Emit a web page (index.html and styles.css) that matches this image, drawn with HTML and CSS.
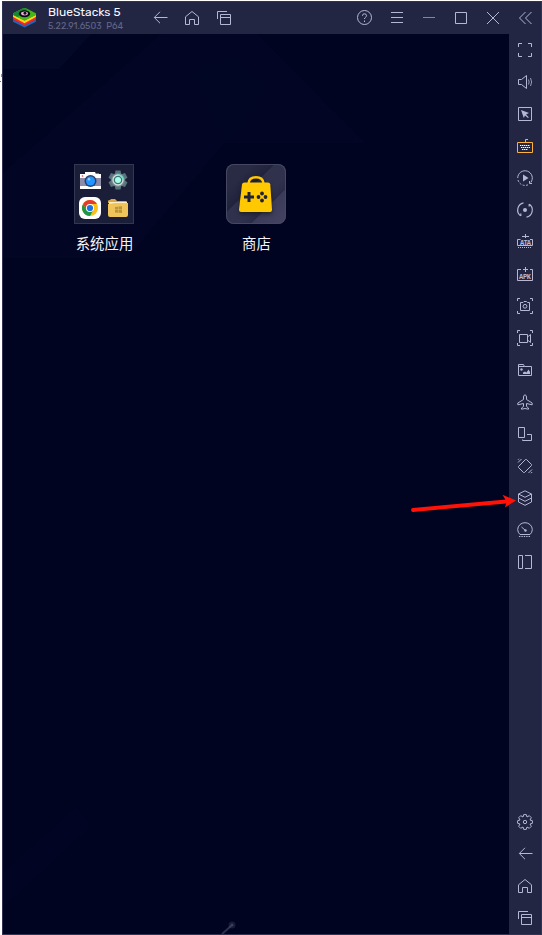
FILE: index.html
```html
<!DOCTYPE html>
<html lang="zh-CN">
<head>
<meta charset="utf-8">
<title>BlueStacks 5</title>
<link rel="stylesheet" href="styles.css">
</head>
<body>
<svg class="defs" aria-hidden="true">
  <symbol id="back" viewBox="0 0 16 16"><path d="M15.500 7.500H2.500M8 1.800L2.300 7.500L8 13.200"/></symbol>
  <symbol id="home" viewBox="0 0 16 16"><path d="M1.500 14.500V6.800L8 1.500L14.500 6.800V14.500H10.500V9.500H5.500V14.500Z"/></symbol>
  <symbol id="recent" viewBox="0 0 16 16"><path d="M1.500 9V1.500H11M4.500 4.500H14.500V14.500H4.500ZM4.500 7.500H14.500"/></symbol>
</svg>
<div class="window">
  <header class="titlebar">
    <svg class="logo" viewBox="0 0 24 22">
      <path fill="#1769c4" d="M0 13L12 19L24 13V15.500L12 21.500L0 15.500Z"/>
      <path fill="#f4252c" d="M0 10.500L12 16.500L24 10.500V13L12 19.500L0 13Z"/>
      <path fill="#ffd414" d="M0 8L12 14L24 8V10.500L12 17L0 10.500Z"/>
      <path fill="#44b618" d="M0 6.500L11 1H13L24 6.500V8.500L12 14.500L0 8.500Z"/>
      <path fill="#178735" d="M0 6.500L11 1L15 2L5 10.500L0 8Z"/>
      <ellipse cx="12" cy="7" rx="6" ry="3.700" fill="#070a18"/>
      <ellipse cx="12" cy="6.800" rx="3.600" ry="2" fill="#e7afd0"/>
      <circle cx="12.500" cy="6.500" r="1.500" fill="#101020"/>
    </svg>
    <div class="brand"><div class="name">BlueStacks 5</div><div class="version">5.22.91.6503&nbsp; P64</div></div>
    <nav class="nav">
      <span class="slot"><svg class="icon"><use href="#back"/></svg></span>
      <span class="slot"><svg class="icon"><use href="#home"/></svg></span>
      <span class="slot"><svg class="icon"><use href="#recent"/></svg></span>
    </nav>
    <nav class="controls">
      <span class="slot"><svg class="icon" viewBox="0 0 16 16"><circle cx="7.500" cy="7.500" r="7"/><path d="M5.500 6V5.500Q5.500 3.800 7.500 3.800T9.500 5.700Q9.500 6.700 8.500 7.300T7.500 9M7.500 10.500V12"/></svg></span>
      <span class="slot"><svg class="icon" viewBox="0 0 16 16"><path d="M2 2.500H14M2 7.500H14M2 12.500H14"/></svg></span>
      <span class="slot"><svg class="icon dim" viewBox="0 0 16 16"><path d="M2 7.500H14"/></svg></span>
      <span class="slot"><svg class="icon" viewBox="0 0 16 16"><path d="M2.500 2.500H13.500V13.500H2.500Z"/></svg></span>
      <span class="slot"><svg class="icon" viewBox="0 0 16 16"><path d="M2 2L14 14M14 2L2 14"/></svg></span>
      <span class="slot"><svg class="icon" viewBox="0 0 16 16"><path d="M8.500 2L2.500 8L8.500 14M14.500 2L8.500 8L14.500 14"/></svg></span>
    </nav>
  </header>
  <div class="body">
    <main class="desktop">
      <svg class="wallpaper" viewBox="0 0 506 900">
        <path class="facet-strong" d="M0 0H88L56 35H0Z"/>
        <path class="facet" d="M0 139L158 0H255L362 109H222L124 224H0Z"/>
        <path class="facet-faint" d="M188 38L224 23L265 50L222 109Z"/>
        <path class="facet-faint" d="M0 838L74 772L88 793L0 874Z"/>
        <path class="streak" d="M219 900L228 892"/><circle cx="229" cy="891" r="3.500" fill="#8d93b5" opacity=".16"/><circle cx="229" cy="891" r="1.500" fill="#8d93b5" opacity=".3"/>
      </svg>
      <div class="apps">
        <div class="app">
          <div class="folder">
            <svg viewBox="0 0 22 22">
              <path fill="#fff" d="M6 3H16L17 5H22V20H1V5H6Z"/><path fill="#8d8ca8" d="M1 9H22V17H1Z"/><path fill="#3fa334" d="M17 4H20V5H17Z"/><circle cx="3.500" cy="7" r=".8" fill="#e83b3b"/>
              <circle cx="11.500" cy="12" r="6" fill="#27406d"/><circle cx="11.500" cy="12" r="4.500" fill="#2196ff"/><circle cx="10" cy="10.200" r="1.200" fill="#8cd0ff"/>
            </svg>
            <svg viewBox="0 0 22 22">
              <g fill="#58747c"><path id="tooth" d="M8.500 1.500H13.500L14.500 6V16L13.500 20.500H8.500L7.500 16V6Z"/><use href="#tooth" transform="rotate(60 11 11)"/><use href="#tooth" transform="rotate(120 11 11)"/></g>
              <circle cx="11" cy="11" r="7" fill="#73858b"/><circle cx="11" cy="11" r="5" fill="#3d7777" stroke="#d5e1df" stroke-width="1.300"/><path d="M11 5.800A5.200 5.200 0 0 1 16.200 11" fill="none" stroke="#5de3c8" stroke-width="1.300"/><circle cx="11" cy="11" r="3" fill="#a7ffeb"/>
            </svg>
            <svg viewBox="0 0 22 22">
              <rect width="22" height="22" rx="6" fill="#fff"/><circle cx="11" cy="11" r="8" fill="#fbc116"/>
              <path fill="#e33b2e" d="M4.070 7A8 8 0 0 1 17.930 7H11L7.540 13Z"/><path fill="#219647" d="M4.070 7L7.540 13L11 15L14.460 13L11 19A8 8 0 0 1 4.070 7Z"/>
              <circle cx="11" cy="11" r="4" fill="#fff"/><circle cx="11" cy="11" r="3.100" fill="#1a73e8"/>
            </svg>
            <svg viewBox="0 0 22 22">
              <path fill="#d9a844" d="M1 4Q1 3 3 3L4 2H8L10 4H19Q20 4 20 6H1Z"/><path fill="#fff0c8" d="M2 5H20V7H2Z"/><path fill="#efc45b" d="M1 7L8 6H21V18Q21 20 19 20H3Q1 20 1 18Z"/><path fill="#ba953a" d="M8 10L11 9.700V12.500H8ZM11.500 9.600L15 9.300V12.500H11.500ZM8 13H11V15.700L8 15.400ZM11.500 13H15V16L11.500 15.700Z"/>
            </svg>
          </div>
          <span class="label">系统应用</span>
        </div>
        <div class="app">
          <div class="store">
            <svg viewBox="0 0 60 60">
              <path d="M22.500 19.500Q23 13.300 30 13.300T37.500 19.500" fill="none" stroke="#ffc800" stroke-width="2.500"/>
              <path fill="#ffc800" d="M18.500 18.500H42Q44 18.500 44.300 20.500L46 45.500Q46.100 48 44 48H15Q12.900 48 13 45.500L16 20.500Q16.300 18.500 18.500 18.500Z"/>
              <path d="M18 33H28M23 28V38" stroke="#202337" stroke-width="3"/>
              <g fill="#202337"><circle cx="36" cy="29.500" r="1.900"/><circle cx="36" cy="36.500" r="1.900"/><circle cx="32.500" cy="33" r="1.900"/><circle cx="39.500" cy="33" r="1.900"/></g>
            </svg>
          </div>
          <span class="label">商店</span>
        </div>
      </div>
    </main>
    <aside class="sidebar">
      <span class="slot"><svg class="icon" viewBox="0 0 16 16"><path d="M1.500 5V1.500H5M11 1.500H14.500V5M14.500 11V14.500H11M5 14.500H1.500V11"/></svg></span>
      <span class="slot"><svg class="icon" viewBox="0 0 16 16"><path d="M1.500 5.500H4.500L9.500 1.500V14.500L4.500 10.500H1.500Z"/><path d="M11.500 5.500Q12.800 8 11.500 10.500M13.500 4Q15.800 8 13.500 12" opacity=".8"/></svg></span>
      <span class="slot"><svg class="icon" viewBox="0 0 16 16"><path d="M1.500 1.500H14.500V14.500H1.500Z"/><path class="solid" d="M4 4L12 7L9 8.500L11.800 11.200L11 12L8 9.500L6.800 12Z"/></svg></span>
      <span class="slot"><svg class="icon active" viewBox="0 0 16 16"><path d="M.5 4.500H15.500V14.500H.5ZM8.500 4.500V1.500H11"/><path class="keys" d="M3 7.500H13M4 9.500H13M5 11.500H11" stroke-dasharray="1.400 .6"/></svg></span>
      <span class="slot"><svg class="icon" viewBox="0 0 16 16"><path d="M.7 8A7.300 7.300 0 1 1 13.800 12.500"/><path d="M1 10A7.300 7.300 0 0 0 11 14.800" stroke-dasharray="2 1.500"/><path d="M12.500 11V13.500H15"/><path class="solid" d="M6 4.500L11.500 8L6 11.500Z"/></svg></span>
      <span class="slot"><svg class="icon heavy" viewBox="0 0 16 16"><path d="M6.500 .8A7.300 7.300 0 0 0 3.500 13.700M3.800 14V11.500M9.500 15.200A7.300 7.300 0 0 0 12.500 2.300M12.200 2V4.500"/><circle class="solid" cx="8" cy="8" r="2"/></svg></span>
      <span class="slot"><svg class="icon" viewBox="0 0 16 16"><path d="M8.500 0V4M5 2.500H12M3.500 5.500H.5V11.500H15.500V5.500H13"/><path d="M1 13.500H15" stroke-dasharray="1 1"/><text class="micro" x="3" y="10.500" textLength="11">ATA</text></svg></span>
      <span class="slot"><svg class="icon" viewBox="0 0 16 16"><path d="M4 3.500H.5V14.500H15.500V3.500H13M8.500 1V6M6 3.500H11"/><text class="micro" x="2" y="12.500" textLength="12">APK</text></svg></span>
      <span class="slot"><svg class="icon" viewBox="0 0 16 16"><path d="M.5 3V.5H3M13 .5H15.500V3M15.500 13V15.500H13M3 15.500H.5V13M3.500 4.500H6L7 3.500H9.500L10.500 4.500H12.500V12.500H3.500Z"/><circle cx="8" cy="8.300" r="1.900"/></svg></span>
      <span class="slot"><svg class="icon" viewBox="0 0 16 16"><path d="M.5 3V.5H3M13 .5H15.500V3M15.500 13V15.500H13M3 15.500H.5V13M2.500 4.500H10.500V12.500H2.500ZM10.500 7L13.500 4.500V12.500L10.500 10Z"/></svg></span>
      <span class="slot"><svg class="icon" viewBox="0 0 16 16"><path d="M1.500 13.500V2.500H6.500L7.500 4.500H14.500V13.500ZM1.500 4.500H7.500"/><circle class="solid" cx="4.500" cy="7.500" r="1.200"/><path class="solid" d="M6 12V10.500L8 9.500L9.500 10.500L11.500 7.500L13 10V12Z"/></svg></span>
      <span class="slot"><svg class="icon" viewBox="0 0 16 16"><path d="M8 .8Q6.500 1.300 6.500 3V5.500L.8 9V10.800L6.500 9.500V12.500L4.500 14V15.200L8 14.500L11.500 15.200V14L9.500 12.500V9.500L15.200 10.800V9L9.500 5.500V3Q9.500 1.300 8 .8Z"/></svg></span>
      <span class="slot"><svg class="icon" viewBox="0 0 16 16"><path d="M1.500 1.500H7.500V11.500H1.500ZM10 8.500H14.500V14.500H5.500V13.500"/></svg></span>
      <span class="slot"><svg class="icon" viewBox="0 0 16 16"><path d="M9.500 1.500L14.500 6.500V7.500L7.500 14.500H6.500L1.500 9.500V8.500L8.500 1.500Z"/><path d="M1 4.500L4.500 1M1 1.800L2 .8M11.500 15L15 11.500M14 15.200L15.200 14"/></svg></span>
      <span class="slot"><svg class="icon" viewBox="0 0 16 16"><path d="M8 .8L14.500 4V12L8 15.300L1.500 12V4ZM1.500 4L8 7.300L14.500 4M1.500 8L8 11.300L14.500 8"/></svg></span>
      <span class="slot"><svg class="icon" viewBox="0 0 16 16"><path d="M3 12.500Q.7 10.500 .7 7.500A7.300 6.800 0 0 1 15.300 7.500Q15.300 10.500 13 12.500ZM8.500 8.500L4.500 5"/><circle class="solid" cx="8.500" cy="8.500" r="1.200"/><path d="M2 14.500H14" stroke-dasharray="1.400 1"/></svg></span>
      <span class="slot"><svg class="icon" viewBox="0 0 16 16"><path d="M1.500 1.500H5.500V14.500H1.500ZM8 1.500H14.500V14.500H8"/></svg></span>
      <span class="slot settings"><svg class="icon" viewBox="0 0 16 16"><path stroke-linejoin="round" d="M6.700 .6H9.300L10 3L12.300 1.700L14.300 3.700L13 6L15.400 6.700V9.300L13 10L14.300 12.300L12.300 14.300L10 13L9.300 15.400H6.700L6 13L3.700 14.300L1.700 12.300L3 10L.6 9.300V6.700L3 6L1.700 3.700L3.700 1.700L6 3Z"/><circle cx="8" cy="8" r="1.700"/></svg></span>
      <span class="slot"><svg class="icon"><use href="#back"/></svg></span>
      <span class="slot"><svg class="icon"><use href="#home"/></svg></span>
      <span class="slot"><svg class="icon"><use href="#recent"/></svg></span>
    </aside>
  </div>
</div>
<svg class="pointer" viewBox="0 0 108 20"><path d="M4 16L97 7.500" fill="none" stroke="#ff1207" stroke-width="3.800" stroke-linecap="round"/><path fill="#ff1207" d="M93.500 .8L107 6.500L96 13.500L97.500 7.500Z"/></svg>
<i class="speck speck-warm"></i><i class="speck speck-cool"></i>
</body>
</html>
```
FILE: styles.css
```css
* { box-sizing: border-box; }
body { margin: 0; height: 935px; padding: 1px 0 0 2px; background: #fff; overflow: hidden; font-family: Roboto, "Noto Sans CJK SC", sans-serif; }
.defs { display: none; }
.window { width: 540px; height: 934px; border: 1px solid #303352; background: #232642; display: flex; flex-direction: column; }
.titlebar { height: 32px; flex: none; display: flex; align-items: stretch; }
.logo { width: 23px; height: 21px; margin: 5px 12px 0 10px; }
.brand { width: 96px; white-space: nowrap; padding-top: 3px; }
.name { color: #f8f8ff; font: 400 12px/14px Rubik, Roboto, sans-serif; letter-spacing: 0; }
.version { color: #62668a; font: 400 9px/14px Rubik, Roboto, sans-serif; letter-spacing: .04px; }
.nav, .controls { display: flex; }
.controls { margin-left: auto; }
.slot { width: 32px; height: 32px; flex: none; display: flex; align-items: center; justify-content: center; }
.icon { width: 16px; height: 16px; fill: none; stroke: #b5b7d5; stroke-width: 1; overflow: visible; }
.heavy { stroke-width: 1.2; }
.dim { stroke: #8285a3; }
.active { stroke: #ffb13c; }
.keys { stroke: #fff; }
.solid { fill: #b5b7d5; stroke: none; }
.micro { fill: #b5b7d5; stroke: none; font: 700 7px "Liberation Mono", monospace; }
.body { flex: 1; display: flex; min-height: 0; }
.desktop { width: 506px; background: #000421; position: relative; overflow: hidden; }
.wallpaper { position: absolute; left: 0; top: 0; width: 506px; height: 900px; }
.facet { fill: #6578b0; opacity: .022; }
.facet-strong { fill: #6578b0; opacity: .042; }
.facet-faint { fill: #6578b0; opacity: .012; }
.streak { stroke: #8d93b5; stroke-width: 2; opacity: .3; }
.apps { position: relative; display: grid; grid-template-columns: 152px 152px; padding: 130px 0 0 25px; }
.app { display: flex; flex-direction: column; align-items: center; }
.folder { width: 60px; height: 60px; border: 1px solid #33364f; background: #1b1e38; display: grid; grid-template-columns: 22px 22px; grid-template-rows: 22px 22px; gap: 6px; padding: 4px; }
.folder svg { width: 22px; height: 22px; }
.store { width: 60px; height: 60px; border-radius: 8px; background: linear-gradient(135deg, #292b45 0 22%, #20233c 40%, #30314d 41% 60%, #292b47 70%, #3b3b59 71%, #454463); box-shadow: inset 0 0 0 1px #464862; }
.store svg { width: 60px; height: 60px; display: block; filter: drop-shadow(0 2px 2px #1119); }
.label { margin-top: 8px; padding-left: 1px; color: #f4f4fa; font: 14.4px/22px "Noto Sans CJK SC", sans-serif; }
.sidebar { width: 32px; display: flex; flex-direction: column; }
.settings { margin-top: 228px; }
.pointer { position: absolute; left: 409px; top: 494px; width: 108px; height: 20px; }
.speck { position: absolute; width: 1px; }
.speck-warm { left: 1px; top: 74px; height: 3px; background: #b88a48; }
.speck-cool { left: 0; top: 81px; height: 1px; background: #278aa5; }
```
